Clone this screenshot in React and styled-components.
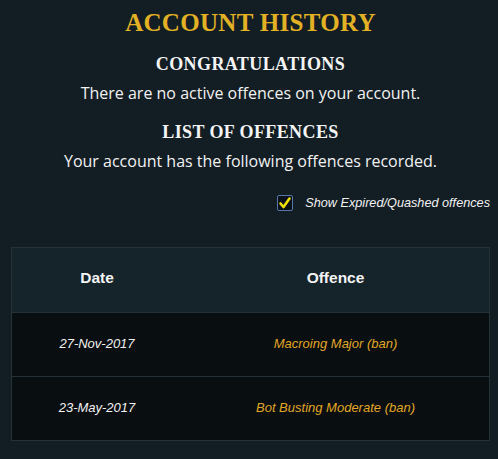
import React from 'react';
import styled, { createGlobalStyle } from 'styled-components';

const GlobalStyle = createGlobalStyle`
  html, body {
    margin: 0;
    padding: 0;
    background: #121d24;
  }
`

const Page = styled.div`
  width: 498px;
  height: 459px;
  background: #121d24;
  color: #f2f2f2;
  padding: 8px 8px 0 11px;
  box-sizing: border-box;
  overflow: hidden;
`

const Title = styled.h1`
  margin: 0;
  text-align: center;
  font-family: "Liberation Serif", serif;
  font-weight: bold;
  font-size: 25px;
  line-height: 30px;
  color: #e2b124;
  letter-spacing: 0.3px;
`

const SubTitle = styled.h2`
  margin: ${p => p.top}px 0 0 0;
  text-align: center;
  font-family: "Liberation Serif", serif;
  font-weight: bold;
  font-size: 18px;
  line-height: 22px;
  color: #f4f4f4;
  letter-spacing: 0.4px;
`

const Text = styled.p`
  margin: 8px 0 0 0;
  text-align: center;
  font-family: "Open Sans", sans-serif;
  font-size: 16px;
  line-height: 20px;
  color: #f2f2f2;
`

const FilterRow = styled.label`
  display: flex;
  justify-content: flex-end;
  align-items: center;
  gap: 12px;
  margin-top: 24px;
  font-family: "Liberation Sans", sans-serif;
  font-style: italic;
  font-size: 12.7px;
  color: #f2f2f2;
`

const Box = styled.span`
  width: 14px;
  height: 14px;
  border: 1px solid #5577aa;
  border-radius: 2px;
  background: #0b1116;
  display: flex;
  align-items: center;
  justify-content: center;
`

const Table = styled.div`
  margin-top: 36px;
  width: 479px;
  border: 1px solid #253238;
  box-sizing: border-box;
`

const Row = styled.div`
  display: grid;
  grid-template-columns: 170px 1fr;
  height: 64px;
  box-sizing: border-box;
  align-items: center;
  background: ${p => (p.head ? '#15232b' : '#090e11')};
  border-top: ${p => (p.head ? 'none' : '1px solid #253238')};
  font-family: "Liberation Sans", sans-serif;
  text-align: center;
`

const Head = styled.div`
  font-weight: bold;
  font-size: 15.5px;
  color: #f4f4f4;
  padding-bottom: 5px;
`

const Cell = styled.div`
  font-style: italic;
  font-size: 13px;
  color: ${p => (p.gold ? '#e0a624' : '#f2f2f2')};
  padding-bottom: 3px;
`

const offences = [
  { date: '27-Nov-2017', name: 'Macroing Major (ban)' },
  { date: '23-May-2017', name: 'Bot Busting Moderate (ban)' }
]

export default function App() {
  return (
    <Page>
      <GlobalStyle />
      <Title>ACCOUNT HISTORY</Title>
      <SubTitle top={15}>CONGRATULATIONS</SubTitle>
      <Text>There are no active offences on your account.</Text>
      <SubTitle top={18}>LIST OF OFFENCES</SubTitle>
      <Text>Your account has the following offences recorded.</Text>
      <FilterRow>
        <Box>
          <svg width="14" height="14" viewBox="0 0 14 14">
            <path d="M2.5 7.5 L5.5 11 L11.5 2.5" fill="none" stroke="#f0e000" strokeWidth="2.6" strokeLinecap="round" strokeLinejoin="round" />
          </svg>
        </Box>
        Show Expired/Quashed offences
      </FilterRow>
      <Table>
        <Row head>
          <Head>Date</Head>
          <Head>Offence</Head>
        </Row>
        {offences.map(o => (
          <Row key={o.date}>
            <Cell>{o.date}</Cell>
            <Cell gold>{o.name}</Cell>
          </Row>
        ))}
      </Table>
    </Page>
  );
}
